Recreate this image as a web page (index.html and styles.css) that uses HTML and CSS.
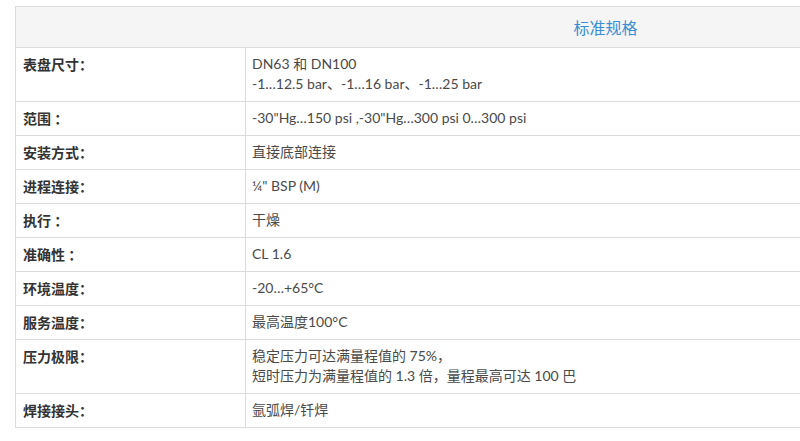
FILE: index.html
```html
<!DOCTYPE html>
<html lang="zh">
<head>
<meta charset="utf-8">
<link rel="stylesheet" href="styles.css">
</head>
<body>
<div class="wrap">
<table class="spec">
  <thead>
    <tr><th colspan="2" class="title">标准规格</th></tr>
  </thead>
  <tbody>
    <tr><td class="k">表盘尺寸：</td><td class="v">DN63 和 DN100<br>-1…12.5 bar、-1…16 bar、-1…25 bar</td></tr>
    <tr><td class="k">范围 ：</td><td class="v">-30"Hg…150 psi ,-30"Hg…300 psi 0…300 psi</td></tr>
    <tr><td class="k">安装方式：</td><td class="v">直接底部连接</td></tr>
    <tr><td class="k">进程连接：</td><td class="v">¼" BSP (M)</td></tr>
    <tr><td class="k">执行 ：</td><td class="v">干燥</td></tr>
    <tr><td class="k">准确性 ：</td><td class="v">CL 1.6</td></tr>
    <tr><td class="k">环境温度：</td><td class="v">-20…+65°C</td></tr>
    <tr><td class="k">服务温度：</td><td class="v">最高温度100°C</td></tr>
    <tr><td class="k">压力极限：</td><td class="v">稳定压力可达满量程值的 75%，<br>短时压力为满量程值的 1.3 倍，量程最高可达 100 巴</td></tr>
    <tr><td class="k">焊接接头：</td><td class="v">氩弧焊/钎焊</td></tr>
  </tbody>
</table>
</div>
</body>
</html>
```

FILE: styles.css
```css
html, body {
  margin: 0;
  padding: 0;
  overflow: hidden;
  background: #fff;
}
.wrap {
  padding: 6px 0 0 15px;
  width: 1200px;
}
.spec {
  width: 1181px;
  border-collapse: collapse;
  font-family: Lato, "Noto Sans CJK SC", sans-serif;
  font-size: 14px;
  line-height: 20px;
  color: #4a4a4a;
}
.spec th, .spec td {
  border: 1px solid #dcdcdc;
}
.title {
  background: #f5f5f5;
  height: 40px;
  padding: 0;
  font-family: "Noto Sans CJK SC", sans-serif;
  font-weight: normal;
  font-size: 16px;
  color: #3b8ed6;
  text-align: center;
}
.k {
  width: 215px;
  padding: 6px 7px 7px;
  vertical-align: top;
  font-family: "Noto Sans CJK SC", sans-serif;
  font-weight: bold;
  font-size: 14px;
  color: #333;
}
.v {
  padding: 6px 6px 7px;
  vertical-align: top;
}
```
